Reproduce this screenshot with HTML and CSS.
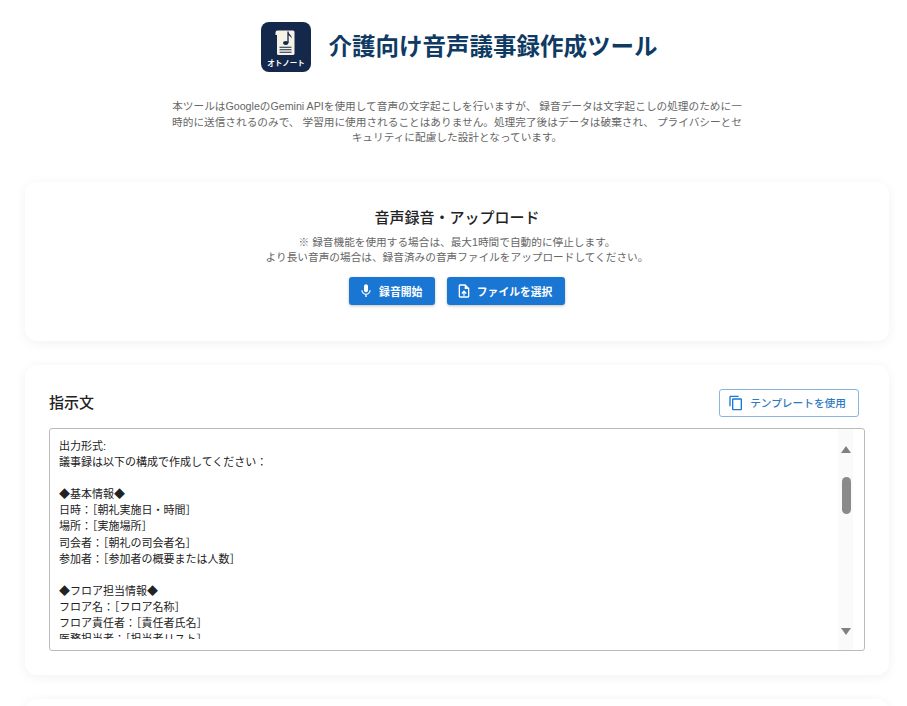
FILE: index.html
```html
<!DOCTYPE html>
<html lang="ja">
<head>
<meta charset="utf-8">
<title>介護向け音声議事録作成ツール</title>
<link rel="stylesheet" href="styles.css">
</head>
<body>
<main class="page">
  <header class="brand">
    <svg class="logo" width="50" height="50" viewBox="0 0 50 50" aria-label="オトノート">
      <rect width="50" height="50" rx="8" fill="#14284b"/>
      <path d="M16.500 8.500H32a1.500 1.500 0 0 1 1.500 1.500v21.500a1.500 1.500 0 0 1-1.500 1.500H17.500a1.500 1.500 0 0 1-1.500-1.500V13h-1.500v-2.500a2 2 0 0 1 2-2z" fill="#f6f3e6"/>
      <path d="M27 9.500v11.500" stroke="#14284b" stroke-width="1.300" fill="none"/>
      <ellipse cx="24.700" cy="21" rx="2.700" ry="2" fill="#14284b"/>
      <path d="M27 9.500c.4 3 4.400 3.300 3.500 7-.6-2-2-3-3.500-3.300z" fill="#14284b"/>
      <path d="M18.500 25.300h12M18.500 27.800h12M18.500 30.300h12" stroke="#14284b" stroke-width="1.100"/>
      <text class="logo-text" x="25" y="44" text-anchor="middle">オトノート</text>
    </svg>
    <h1 class="title">介護向け音声議事録作成ツール</h1>
  </header>

  <p class="intro">本ツールはGoogleのGemini APIを使用して音声の文字起こしを行いますが、 録音データは文字起こしの処理のために一時的に送信されるのみで、 学習用に使用されることはありません。処理完了後はデータは破棄され、 プライバシーとセキュリティに配慮した設計となっています。</p>

  <section class="card upload">
    <h2 class="upload-title">音声録音・アップロード</h2>
    <p class="note">※ 録音機能を使用する場合は、最大1時間で自動的に停止します。<br>より長い音声の場合は、録音済みの音声ファイルをアップロードしてください。</p>
    <div class="actions">
      <button class="btn" type="button">
        <svg width="16" height="16" viewBox="0 0 24 24" fill="#fff"><path d="M12 14c1.660 0 3-1.340 3-3V5c0-1.660-1.340-3-3-3S9 3.340 9 5v6c0 1.660 1.340 3 3 3zm5.300-3c0 3-2.540 5.100-5.300 5.100S6.700 14 6.700 11H5c0 3.410 2.720 6.230 6 6.720V21h2v-3.280c3.280-.48 6-3.300 6-6.720h-1.700z"/></svg>
        録音開始
      </button>
      <button class="btn" type="button">
        <svg width="16" height="16" viewBox="0 0 24 24" fill="#fff"><path d="M14 2H6c-1.100 0-2 .9-2 2v16c0 1.100.9 2 2 2h12c1.100 0 2-.9 2-2V8l-6-6zm4 18H6V4h7v5h5v11zM8 15.010l1.410 1.410L11 14.840V19h2v-4.160l1.590 1.590L16 15.010 12.010 11z"/></svg>
        ファイルを選択
      </button>
    </div>
  </section>

  <section class="card prompt">
    <div class="prompt-head">
      <h2 class="prompt-title">指示文</h2>
      <button class="btn-outline" type="button">
        <svg width="16" height="16" viewBox="0 0 24 24" fill="#1976d2"><path d="M16 1H4c-1.100 0-2 .9-2 2v14h2V3h12V1zm3 4H8c-1.100 0-2 .9-2 2v14c0 1.100.9 2 2 2h11c1.100 0 2-.9 2-2V7c0-1.100-.9-2-2-2zm0 16H8V7h11v14z"/></svg>
        テンプレートを使用
      </button>
    </div>
    <div class="field">
      <textarea class="editor" readonly>出力形式:
議事録は以下の構成で作成してください：

◆基本情報◆
日時：［朝礼実施日・時間］
場所：［実施場所］
司会者：［朝礼の司会者名］
参加者：［参加者の概要または人数］

◆フロア担当情報◆
フロア名：［フロア名称］
フロア責任者：［責任者氏名］
医務担当者：［担当者リスト］
</textarea>
      <div class="scrollbar" aria-hidden="true">
        <span class="arrow-up"></span>
        <span class="thumb"></span>
        <span class="arrow-down"></span>
      </div>
    </div>
  </section>

  <section class="card tail"></section>
</main>
</body>
</html>
```
FILE: styles.css
```css
* { box-sizing: border-box; }
html, body { margin: 0; height: 706px; overflow: hidden; background: #fff; }
body { font-family: "Liberation Sans", "Noto Sans CJK JP", sans-serif; color: #222; }

.page { padding: 22px 18px 0 25px; }

.brand { display: flex; justify-content: center; align-items: center; gap: 18px; padding-left: 4px; }
.logo { display: block; flex: none; }
.logo-text { font: 700 7.500px "Liberation Sans", "Noto Sans CJK JP", sans-serif; fill: #fff; }
.title { margin: 0; font-size: 23.500px; font-weight: 700; line-height: 50px; color: #0f3a64; }

.intro { width: 580px; margin: 27px auto 0; font-size: 10.660px; line-height: 15.660px; text-align: center; color: #666; }

.card { background: #fff; border-radius: 12px; box-shadow: 0 2px 12px rgba(0,0,0,.06); padding: 24px; }

.upload { height: 159px; margin-top: 36px; text-align: center; }
.upload-title { margin: 0; font-size: 15px; font-weight: 500; line-height: 23px; color: #222; }
.note { margin: 6px 0 0; font-size: 10.660px; line-height: 15px; color: #666; }
.actions { display: flex; justify-content: center; gap: 12px; margin-top: 12px; }
.btn { display: flex; align-items: center; justify-content: center; gap: 5px; height: 28px; padding: 0 12.500px 0 9px; border: 0; border-radius: 3px; background: #1976d2; color: #fff; font: 700 10.800px "Liberation Sans", "Noto Sans CJK JP", sans-serif; box-shadow: 0 1px 3px rgba(0,0,0,.25); }

.prompt { height: 310px; margin-top: 24px; }
.prompt-head { display: flex; justify-content: space-between; align-items: center; height: 28px; padding-right: 6px; }
.prompt-title { margin: -3px 0 0; font-size: 15px; font-weight: 500; color: #222; }
.btn-outline { display: flex; align-items: center; gap: 6px; height: 28px; padding: 0 12px 0 8px; border: 1px solid #8ab6de; border-radius: 3px; background: #fff; color: #2f7abf; font: 500 10.700px "Liberation Sans", "Noto Sans CJK JP", sans-serif; }

.field { position: relative; height: 223px; margin-top: 11px; padding: 9px 9px 11px; border: 1px solid #bbb; border-radius: 3px; }
.editor { display: block; width: 100%; height: 201px; padding: 0; border: 0; font: 11px/16.100px "Liberation Sans", "Noto Sans CJK JP", sans-serif; color: #222; resize: none; overflow: hidden; outline: none; }
.scrollbar { position: absolute; top: 0; right: 11px; width: 15px; height: 221px; background: #fafafa; }
.arrow-up, .arrow-down { position: absolute; left: 3px; width: 0; height: 0; border-left: 5px solid transparent; border-right: 5px solid transparent; }
.arrow-up { top: 17px; border-bottom: 7px solid #808080; }
.arrow-down { bottom: 15px; border-top: 7px solid #808080; }
.thumb { position: absolute; top: 48px; left: 4px; width: 9px; height: 37px; border-radius: 5px; background: #8a8a8a; }

.tail { height: 120px; margin-top: 24px; }
```
